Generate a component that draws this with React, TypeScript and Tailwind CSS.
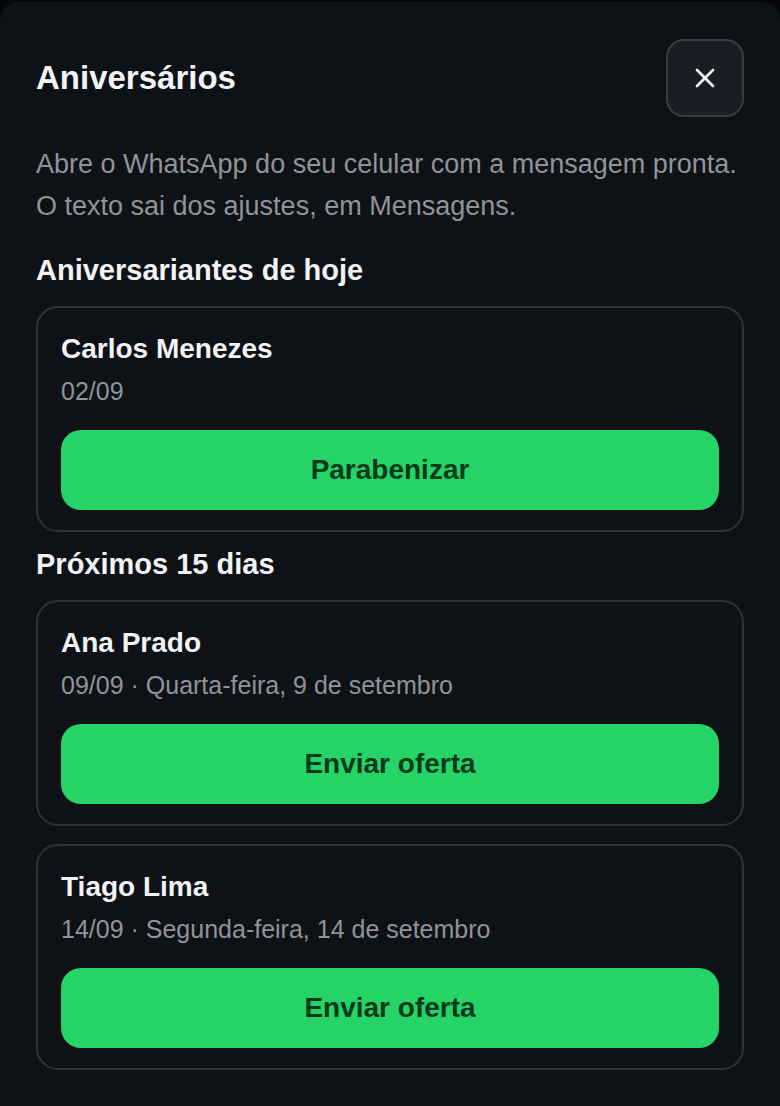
import { X } from "lucide-react";

type Aniversariante = {
  nome: string;
  data: string;
  extenso?: string;
  acao: string;
};

const HOJE: Aniversariante[] = [{ nome: "Carlos Menezes", data: "02/09", acao: "Parabenizar" }];

const PROXIMOS: Aniversariante[] = [
  { nome: "Ana Prado", data: "09/09", extenso: "Quarta-feira, 9 de setembro", acao: "Enviar oferta" },
  { nome: "Tiago Lima", data: "14/09", extenso: "Segunda-feira, 14 de setembro", acao: "Enviar oferta" },
];

function CardAniversario({ p }: { p: Aniversariante }) {
  return (
    <div className="rounded-[22px] border-2 border-[#2e3136] px-[23px] pb-[20px] pt-[23px]">
      <h3 className="text-[28px] font-bold leading-[36px] text-[#f1f3f5]">{p.nome}</h3>
      <p className="mt-[6px] text-[25px] leading-[37px] text-[#8e949b]">
        {p.extenso ? `${p.data} · ${p.extenso}` : p.data}
      </p>
      <button
        type="button"
        className="mt-[20px] flex h-[80px] w-full items-center justify-center rounded-[20px] bg-[#25d366] text-[28px] font-bold text-[#07391b]"
      >
        {p.acao}
      </button>
    </div>
  );
}

export default function App() {
  return (
    <div className="min-h-[1106px] bg-[#050608] pt-[2px] font-['Liberation_Sans',Arial,sans-serif]">
      <div className="min-h-[1104px] rounded-t-[18px] bg-[#0e1116] px-[36px] pt-[37px] pb-10">
        <div className="flex items-center justify-between">
          <h1 className="text-[33px] font-bold leading-[38px] text-[#f1f3f5]">Aniversários</h1>
          <button
            type="button"
            aria-label="Fechar"
            className="flex h-[78px] w-[78px] items-center justify-center rounded-[18px] border-2 border-[#393c42] bg-[#1a1d24] text-[#f1f3f5]"
          >
            <X size={32} strokeWidth={2} />
          </button>
        </div>

        <p className="mt-[27px] text-[27px] leading-[41.5px] text-[#8e949b]">
          Abre o WhatsApp do seu celular com a mensagem pronta. O texto sai dos ajustes, em Mensagens.
        </p>

        <h2 className="mt-[24px] text-[29px] font-bold leading-[38px] text-[#f1f3f5]">Aniversariantes de hoje</h2>
        <div className="mt-[17px] flex flex-col gap-[18px]">
          {HOJE.map((p) => (
            <CardAniversario key={p.nome} p={p} />
          ))}
        </div>

        <h2 className="mt-[13px] text-[29px] font-bold leading-[38px] text-[#f1f3f5]">Próximos 15 dias</h2>
        <div className="mt-[17px] flex flex-col gap-[18px]">
          {PROXIMOS.map((p) => (
            <CardAniversario key={p.nome} p={p} />
          ))}
        </div>
      </div>
    </div>
  );
}
